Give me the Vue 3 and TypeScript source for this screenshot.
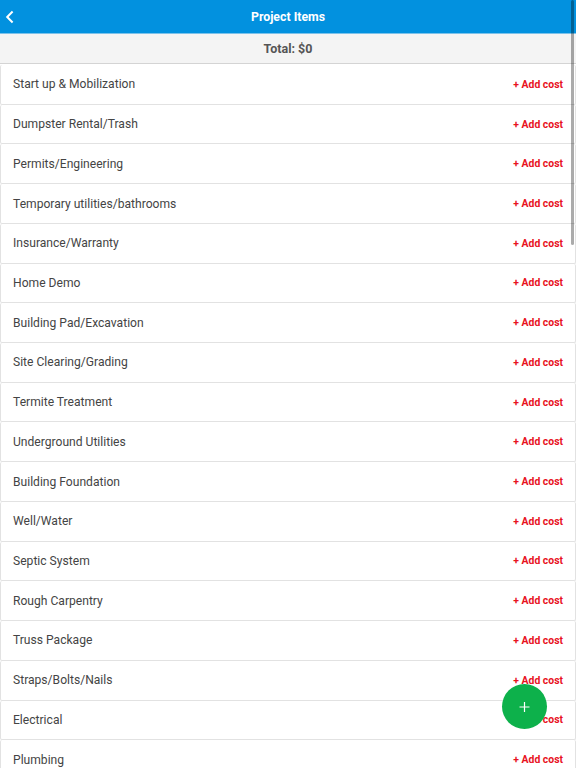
<script setup lang="ts">
const items: string[] = [
  'Start up & Mobilization',
  'Dumpster Rental/Trash',
  'Permits/Engineering',
  'Temporary utilities/bathrooms',
  'Insurance/Warranty',
  'Home Demo',
  'Building Pad/Excavation',
  'Site Clearing/Grading',
  'Termite Treatment',
  'Underground Utilities',
  'Building Foundation',
  'Well/Water',
  'Septic System',
  'Rough Carpentry',
  'Truss Package',
  'Straps/Bolts/Nails',
  'Electrical',
  'Plumbing',
];
</script>

<template>
  <div class="screen">
    <header class="topbar">
      <svg class="back" width="10" height="14" viewBox="0 0 10 14">
        <path d="M7.6 1.5 L2.2 7 L7.6 12.5" fill="none" stroke="#fff" stroke-width="2" />
      </svg>
      <h1>Project Items</h1>
    </header>
    <div class="total">Total: $0</div>
    <ul class="list">
      <li v-for="item in items" :key="item" class="row">
        <span class="name">{{ item }}</span>
        <span class="add">+ Add cost</span>
      </li>
    </ul>
    <div class="scrollbar"></div>
    <button class="fab">
      <svg width="12" height="12" viewBox="0 0 12 12">
        <path d="M5.5 1 V11 M0.5 6 H10.5" stroke="#fff" stroke-width="1.2" fill="none" />
      </svg>
    </button>
  </div>
</template>

<style>
html,
body {
  margin: 0;
  overflow: hidden;
}
</style>

<style scoped>
.screen {
  position: relative;
  width: 576px;
  height: 768px;
  overflow: hidden;
  background: #fff;
  font-family: Roboto, sans-serif;
}

.topbar {
  position: relative;
  height: 33px;
  display: flex;
  align-items: center;
  justify-content: center;
  background: #0291df;
  border-bottom: 1px solid #7cc2ea;
}

.topbar h1 {
  margin: 0;
  font-size: 12.3px;
  font-weight: 700;
  color: #fff;
}

.back {
  position: absolute;
  left: 5px;
  top: 10px;
}

.total {
  height: 29px;
  line-height: 29px;
  text-align: center;
  font-size: 12.5px;
  font-weight: 700;
  color: #555;
  background: #f4f4f4;
  border-bottom: 1px solid #d4d4d4;
}

.list {
  margin: 0;
  padding: 1px 0 0;
  list-style: none;
}

.row {
  box-sizing: border-box;
  height: 39.72px;
  display: flex;
  align-items: center;
  justify-content: space-between;
  padding: 0 12px;
  border: 1px solid #e2e2e2;
  border-top: none;
  border-radius: 2px;
}

.name {
  font-size: 12.1px;
  color: #444;
}

.add {
  font-size: 10.4px;
  font-weight: 700;
  color: #e8121e;
}

.scrollbar {
  position: absolute;
  right: 2px;
  top: 0;
  width: 3px;
  height: 245px;
  border-radius: 2px;
  background: rgba(0, 0, 0, 0.33);
}

.fab {
  position: absolute;
  left: 502px;
  top: 684px;
  width: 45px;
  height: 45px;
  padding: 0;
  border: none;
  border-radius: 50%;
  background: #0db14b;
  display: flex;
  align-items: center;
  justify-content: center;
}
</style>
